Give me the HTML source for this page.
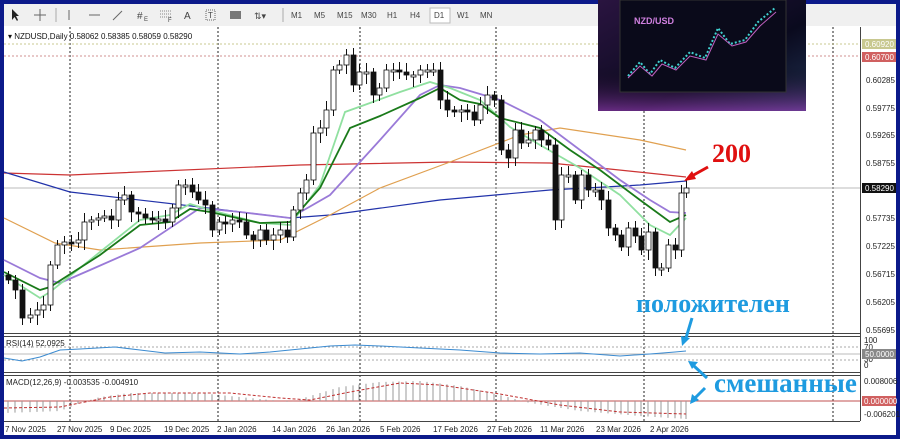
<!DOCTYPE html>
<html><head><meta charset="utf-8"><style>
body{margin:0;width:900px;height:439px;overflow:hidden;background:#0c1a8a;font-family:"Liberation Sans",sans-serif}
svg{display:block}
</style></head><body>
<svg id="s" width="900" height="439" xmlns="http://www.w3.org/2000/svg" font-family="Liberation Sans, sans-serif">
<rect x="0" y="0" width="900" height="439" fill="#0c1a8a"/>
<rect x="4" y="4" width="892" height="22" fill="#f0f0f0"/>
<rect x="4" y="26" width="892" height="409" fill="#fff"/>
<!-- toolbar -->
<g font-size="8" fill="#444">
<path d="M12 9 L12 20 L14.5 17 L17 21 L18 20 L16 16 L19 16 Z" fill="#222"/>
<path d="M40 9V21M34 15H46" stroke="#666" stroke-width="1"/>
<path d="M56 8V22" stroke="#aaa"/>
<path d="M69 10V20" stroke="#666"/>
<path d="M89 15H100" stroke="#666"/>
<path d="M113 20L122 11" stroke="#666"/>
<text x="137" y="19" font-size="10">#</text><text x="144" y="21" font-size="6">E</text>
<path d="M160 11H171M160 14H171M160 17H171" stroke="#888" stroke-dasharray="1 1"/><text x="168" y="22" font-size="6">F</text>
<text x="184" y="19" font-size="10">A</text>
<rect x="206" y="10" width="9" height="10" fill="none" stroke="#666" stroke-dasharray="1 1"/><text x="208" y="18" font-size="8">T</text>
<rect x="230" y="11" width="11" height="8" fill="#777"/>
<text x="254" y="19" font-size="9">⇅▾</text>
<path d="M283 8V22" stroke="#aaa"/>
<text x="291" y="18">M1</text><text x="314" y="18">M5</text><text x="337" y="18">M15</text><text x="361" y="18">M30</text><text x="387" y="18">H1</text><text x="410" y="18">H4</text>
<rect x="430" y="8" width="20" height="15" fill="#fff" stroke="#bbb"/>
<text x="434" y="18">D1</text><text x="457" y="18">W1</text><text x="480" y="18">MN</text>
</g>
<!-- grid & lines -->
<g stroke="#222" stroke-dasharray="2 2" stroke-width="1">
<path d="M70 27V421M218 27V421M360 27V421M496 27V421M644 27V421M833 27V421"/>
</g>
<path d="M4 44H860" stroke="#c8c890" stroke-dasharray="2 2"/>
<path d="M4 56H860" stroke="#d09090" stroke-dasharray="2 2"/>
<path d="M4 188H860" stroke="#bbb"/>
<text x="8" y="39" font-size="8" fill="#111">▾ NZDUSD,Daily  0.58062 0.58385 0.58059 0.58290</text>
<!-- MAs -->
<g fill="none" stroke-width="1.2">
<polyline stroke="#cc3333" points="4,173 70,175 300,165 450,162 550,163 600,168 686,177"/>
<polyline stroke="#2233aa" points="4,172 70,192 200,207 290,218 330,215 440,200 550,190 640,185 686,181"/>
<polyline stroke="#e0a050" points="4,218 55,243 100,250 200,243 280,240 330,215 380,188 450,162 520,135 560,128 640,140 686,150"/>
<polyline stroke="#9a7ad8" stroke-width="1.8" points="4,260 40,278 60,283 90,270 140,248 200,208 240,212 290,218 330,195 380,140 420,95 440,85 460,88 500,100 540,120 580,150 620,180 650,200 670,212 686,213"/>
<polyline stroke="#90e0a0" stroke-width="1.8" points="4,275 40,298 50,292 100,252 140,220 170,215 190,204 210,210 260,223 290,225 320,185 345,112 370,103 400,92 430,82 450,88 480,100 510,127 540,145 580,168 620,195 650,225 670,235 686,218"/>
<polyline stroke="#1a7a1a" stroke-width="1.8" points="4,272 40,290 50,287 100,255 140,225 170,222 190,209 210,212 260,223 290,222 320,188 350,128 380,116 420,98 440,88 460,100 480,104 500,118 540,128 570,150 600,170 640,200 670,222 686,215"/>
</g>
<g id="candles"></g>
<!-- panel borders -->
<path d="M4 333.5H860M4 336.5H860M4 372.5H860M4 375.5H860M4 421.5H860" stroke="#444"/>
<path d="M860.5 27V421" stroke="#444"/>
<!-- RSI -->
<path d="M4 347H860M4 360H860" stroke="#aaa" stroke-dasharray="2 2"/>
<path d="M4 354H860" stroke="#bbb"/>
<polyline fill="none" stroke="#3a8ad0" points="4,358 22,361 40,357 60,350 80,349 115,347 140,350 165,353 200,352 240,354 270,352 300,349 330,346 355,345 380,346 420,348 460,350 500,353 540,354 580,353 620,356 650,354 675,352 686,351"/>
<text x="6" y="346" font-size="8" fill="#222">RSI(14) 52.0925</text>
<!-- MACD -->
<path d="M4 401H860" stroke="#c05050"/>
<g id="macd"></g>
<text x="6" y="385" font-size="8" fill="#222">MACD(12,26,9) -0.003535 -0.004910</text>
<!-- axis -->
<g font-size="8" fill="#222">
<text x="866" y="83">0.60285</text><text x="866" y="111">0.59775</text><text x="866" y="138">0.59265</text><text x="866" y="166">0.58755</text>
<text x="866" y="221">0.57735</text><text x="866" y="249">0.57225</text><text x="866" y="277">0.56715</text><text x="866" y="305">0.56205</text><text x="866" y="333">0.55695</text>
<text x="864" y="343">100</text><text x="864" y="350">70</text><text x="864" y="362">30</text><text x="864" y="368">0</text>
<text x="864" y="384">0.008006</text><text x="864" y="417">-0.006201</text>
</g>
<rect x="862" y="39" width="34" height="10" fill="#c8c890"/><text x="865" y="47" font-size="8" fill="#fff">0.60920</text>
<rect x="862" y="52" width="34" height="10" fill="#d06060"/><text x="865" y="60" font-size="8" fill="#fff">0.60700</text>
<rect x="862" y="183" width="34" height="10" fill="#111"/><text x="865" y="191" font-size="8" fill="#fff">0.58290</text>
<rect x="862" y="349" width="34" height="10" fill="#888"/><text x="865" y="357" font-size="8" fill="#fff">50.0000</text>
<rect x="862" y="396" width="34" height="10" fill="#d06060"/><text x="864" y="404" font-size="8" fill="#fff">0.000000</text>
<g font-size="8" fill="#222">
<text x="5" y="432">7 Nov 2025</text><text x="57" y="432">27 Nov 2025</text><text x="110" y="432">9 Dec 2025</text><text x="164" y="432">19 Dec 2025</text><text x="217" y="432">2 Jan 2026</text><text x="272" y="432">14 Jan 2026</text><text x="326" y="432">26 Jan 2026</text><text x="380" y="432">5 Feb 2026</text><text x="433" y="432">17 Feb 2026</text><text x="487" y="432">27 Feb 2026</text><text x="540" y="432">11 Mar 2026</text><text x="596" y="432">23 Mar 2026</text><text x="650" y="432">2 Apr 2026</text>
</g>
<!-- thumbnail -->
<defs><linearGradient id="g1" x1="0" y1="0" x2="1" y2="1"><stop offset="0" stop-color="#2a1440"/><stop offset="0.6" stop-color="#0a0a1e"/><stop offset="1" stop-color="#203050"/></linearGradient>
<linearGradient id="g2" x1="0" y1="0" x2="0" y2="1"><stop offset="0.6" stop-color="#000" stop-opacity="0"/><stop offset="1" stop-color="#a040c0" stop-opacity="0.6"/></linearGradient></defs>
<rect x="598" y="0" width="208" height="111" fill="url(#g1)"/>
<rect x="598" y="0" width="208" height="111" fill="url(#g2)"/>
<rect x="620" y="0" width="166" height="92" fill="#0a0a1a" stroke="#333"/>
<text x="634" y="24" font-size="9" font-weight="bold" fill="#d080e0">NZD/USD</text>
<polyline fill="none" stroke="#40d0d0" stroke-width="2" stroke-dasharray="2 2" points="628,76 640,62 650,74 660,60 675,68 690,52 705,58 718,28 730,44 745,40 758,22 775,8"/>
<polyline fill="none" stroke="#c060c0" stroke-width="1" points="628,78 640,66 652,76 662,64 676,70 690,56 706,60 718,34 732,46 746,42 760,26 776,12"/>
<!-- annotations -->
<text x="712" y="162" font-family="Liberation Serif,serif" font-size="26" font-weight="bold" fill="#e01010">200</text>
<path d="M708 167L690 177" stroke="#e01010" stroke-width="3"/><path d="M684 181L692 171L696 179Z" fill="#e01010"/>
<text x="636" y="312" font-family="Liberation Serif,serif" font-size="26" font-weight="bold" fill="#1e9be0">положителен</text>
<path d="M692 318L686 338" stroke="#1e9be0" stroke-width="3"/><path d="M682 346L681 336L690 338Z" fill="#1e9be0"/>
<text x="714" y="392" font-family="Liberation Serif,serif" font-size="27" font-weight="bold" fill="#1e9be0">смешанные</text>
<path d="M707 378L694 366" stroke="#1e9be0" stroke-width="3"/><path d="M688 361L698 362L692 369Z" fill="#1e9be0"/>
<path d="M705 388L695 398" stroke="#1e9be0" stroke-width="3"/><path d="M690 404L692 394L699 400Z" fill="#1e9be0"/>
</svg>
<script>
var P=[[8,280],[15,290],[22,318],[30,315],[37,310],[43,305],[50,265],[57,245],[64,242],[71,243],[78,240],[84,222],[91,220],[98,218],[104,216],[111,220],[118,200],[124,195],[131,212],[138,214],[145,218],[152,220],[158,219],[165,222],[172,208],[178,185],[185,185],[192,192],[198,200],[205,205],[212,230],[219,222],[225,224],[232,220],[239,222],[246,235],[253,240],[260,230],[266,240],[273,235],[280,230],[287,237],[293,210],[300,193],[306,180],[313,133],[320,128],[326,110],[333,70],[339,65],[346,55],[353,85],[359,72],[366,72],[373,95],[379,88],[386,70],[393,70],[399,72],[406,75],[413,75],[420,70],[427,70],[433,70],[440,100],[447,110],[454,112],[461,110],[467,112],[474,120],[480,105],[487,95],[494,100],[501,150],[508,158],[515,130],[521,143],[528,140],[535,130],[541,140],[548,145],[555,220],[561,175],[568,175],[575,200],[581,175],[588,190],[595,190],[601,200],[608,228],[615,235],[621,247],[628,228],[635,236],[641,250],[648,232],[655,268],[661,268],[668,245],[675,250],[681,193],[686,188]];
var g=document.getElementById('candles'),h="";
var prev=275;
for(var i=0;i<P.length;i++){var x=P[i][0],c=P[i][1],o=prev;var t=Math.min(o,c),b=Math.max(o,c);if(b-t<2){b=t+2;}
var hi=t-4-(i*7%6),lo=b+4+(i*5%7);
h+='<line x1="'+(x+0.5)+'" y1="'+hi+'" x2="'+(x+0.5)+'" y2="'+lo+'" stroke="#111"/>';
h+='<rect x="'+(x-2)+'" y="'+t+'" width="5" height="'+(b-t)+'" fill="'+(c>o?'#111':'#fff')+'" stroke="#111" stroke-width="0.8"/>';prev=c;}
g.innerHTML=h;
var K=[[4,-12],[60,-10],[80,-2],[100,4],[130,8],[200,8],[250,3],[290,-1],[310,5],[340,14],[380,19],[420,20],[460,15],[500,6],[530,-2],[580,-10],[640,-15],[686,-18]];
function val(x){for(var j=0;j<K.length-1;j++){if(x<=K[j+1][0]){var f=(x-K[j][0])/(K[j+1][0]-K[j][0]);return K[j][1]+f*(K[j+1][1]-K[j][1]);}}return K[K.length-1][1];}
var m="";
for(var i=0;i<P.length;i++){var x=P[i][0];var v=val(x);
m+='<line x1="'+x+'" y1="401" x2="'+x+'" y2="'+(401-v)+'" stroke="#999"/>';}
g=document.getElementById('macd');
g.innerHTML=m+'<polyline fill="none" stroke="#c03030" stroke-dasharray="3 2" points="4,408 60,407 110,397 150,393 230,393 280,398 310,400 350,392 400,383 440,385 500,394 560,405 620,412 686,414"/>';
</script>
</body></html>
